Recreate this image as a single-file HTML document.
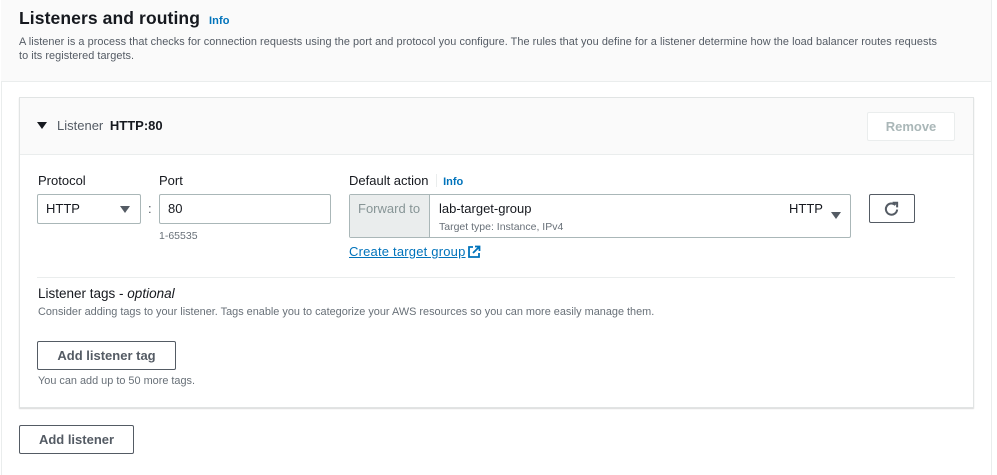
<!DOCTYPE html>
<html><head><meta charset="utf-8"><style>
*{box-sizing:border-box;margin:0;padding:0}
body{width:997px;height:475px;background:#fff;font-family:"Liberation Sans",sans-serif;color:#16191f;position:relative;overflow:hidden}
.abs{position:absolute}
.outer{left:1px;top:0;width:991px;height:475px;border-left:1px solid #eaeded;border-right:1px solid #eaeded}
.head{left:1px;top:0;width:990px;height:82px;background:#fafafa;border-bottom:1px solid #eaeded}
h1{position:absolute;left:19px;top:8px;font-size:17.5px;font-weight:bold;letter-spacing:0.1px}
.info{color:#0073bb;font-size:11px;font-weight:bold}
.desc{left:19px;top:35px;width:975px;font-size:10.9px;line-height:14px;color:#545b64;letter-spacing:0.05px}
.card{left:19px;top:97px;width:955px;height:311px;border:1px solid #e1e4e4;box-shadow:0 1px 1px rgba(0,0,0,.15)}
.chead{left:20px;top:98px;width:953px;height:57px;background:#fafafa;border-bottom:1px solid #eaeded}
.lbl{font-size:13px}
.box{border:1px solid #aab7b8;border-radius:2px;background:#fff}
.btn{border:1px solid #545b64;border-radius:2px;background:#fff;font-weight:bold;font-size:13px;text-align:center;color:#545b64}
.tri{width:0;height:0;border-left:5px solid transparent;border-right:5px solid transparent;border-top:7px solid #545b64}
.small{font-size:10.5px;color:#687078}
</style></head><body>
<div class="abs outer"></div>
<div class="abs head"></div>
<h1>Listeners and routing <span class="info" style="margin-left:4px">Info</span></h1>
<div class="abs desc">A listener is a process that checks for connection requests using the port and protocol you configure. The rules that you define for a listener determine how the load balancer routes requests<br>to its registered targets.</div>

<div class="abs card"></div>
<div class="abs chead"></div>
<div class="abs tri" style="left:37px;top:122px;border-top-color:#16191f"></div>
<div class="abs" style="left:57px;top:118px;font-size:13px;color:#545b64">Listener <b style="color:#16191f;margin-left:3px">HTTP:80</b></div>
<div class="abs btn" style="left:867px;top:112px;width:88px;height:29px;line-height:27px;border-color:#eaeded;color:#aab7b8">Remove</div>

<div class="abs lbl" style="left:38px;top:173px">Protocol</div>
<div class="abs lbl" style="left:159px;top:173px">Port</div>
<div class="abs box" style="left:37px;top:194px;width:104px;height:30px"></div>
<div class="abs" style="left:46px;top:201px;font-size:13px">HTTP</div>
<div class="abs tri" style="left:120px;top:206px"></div>
<div class="abs" style="left:148px;top:201px;font-size:13px;color:#545b64">:</div>
<div class="abs box" style="left:159px;top:194px;width:172px;height:30px"></div>
<div class="abs" style="left:168px;top:201px;font-size:13px">80</div>
<div class="abs small" style="left:159px;top:230px">1-65535</div>

<div class="abs lbl" style="left:349px;top:173px">Default action <span style="display:inline-block;width:1px;height:13px;background:#eaeded;margin:0 6px -2px 4px"></span><span class="info">Info</span></div>
<div class="abs box" style="left:349px;top:194px;width:502px;height:44px"></div>
<div class="abs" style="left:350px;top:195px;width:80px;height:42px;background:#eaeded;border-right:1px solid #aab7b8"></div>
<div class="abs" style="left:358px;top:201px;font-size:13px;color:#879596">Forward to</div>
<div class="abs" style="left:439px;top:201px;font-size:13px">lab-target-group</div>
<div class="abs small" style="left:439px;top:221px">Target type: Instance, IPv4</div>
<div class="abs" style="left:789px;top:201px;font-size:13px">HTTP</div>
<div class="abs tri" style="left:831px;top:212px"></div>
<div class="abs btn" style="left:869px;top:194px;width:46px;height:29px"></div>
<svg class="abs" style="left:882px;top:200px" width="19" height="18" viewBox="0 0 16 16"><path d="M13 8.5A5 5 0 1 1 11.5 4.5" fill="none" stroke="#545b64" stroke-width="1.8"/><path d="M9 2.5h4v4" fill="none" stroke="#545b64" stroke-width="1.8"/></svg>
<div class="abs" style="left:349px;top:244px;font-size:13px;color:#0073bb;text-decoration:underline;letter-spacing:0.2px">Create target group</div>
<svg class="abs" style="left:467px;top:245px" width="14" height="14" viewBox="0 0 14 14"><path d="M6 2H2v10h10V8" fill="none" stroke="#0073bb" stroke-width="1.8"/><path d="M8 1.5h4.5V6M12.5 1.5L6 8" fill="none" stroke="#0073bb" stroke-width="1.8"/></svg>

<div class="abs" style="left:37px;top:277px;width:918px;height:1px;background:#eaeded"></div>
<div class="abs" style="left:38px;top:286px;font-size:13.5px">Listener tags - <i>optional</i></div>
<div class="abs small" style="left:38px;top:306px;font-size:10.9px">Consider adding tags to your listener. Tags enable you to categorize your AWS resources so you can more easily manage them.</div>
<div class="abs btn" style="left:37px;top:341px;width:139px;height:29px;line-height:27px">Add listener tag</div>
<div class="abs small" style="left:38px;top:375px;font-size:10.9px">You can add up to 50 more tags.</div>

<div class="abs btn" style="left:19px;top:425px;width:115px;height:29px;line-height:27px">Add listener</div>
</body></html>
